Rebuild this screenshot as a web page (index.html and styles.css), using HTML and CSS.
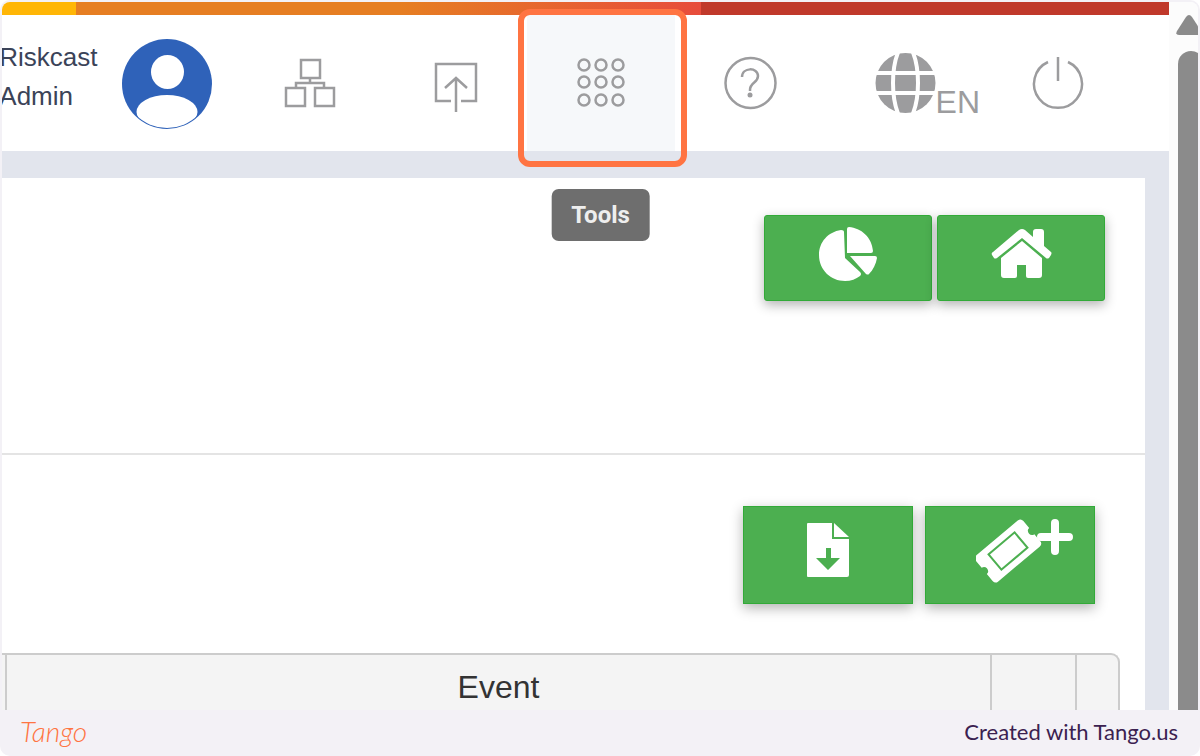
FILE: index.html
```
<!DOCTYPE html>
<html lang="en">
<head>
    <meta charset="utf-8">
    <title>Riskcast</title>
    <link rel="stylesheet" href="styles.css">
</head>
<body>
    <div class="frame">
        <div class="shot">
            <div class="app">
                <div class="color-line"></div>
                <header class="header">
                    <div class="user">
                        <span class="user-name">Riskcast<br>Admin</span>
                        <svg class="avatar" viewBox="0 0 90 90" width="90" height="90">
                            <defs>
                                <clipPath id="avatarClip"><circle cx="45" cy="45" r="44"/></clipPath>
                            </defs>
                            <circle cx="45" cy="45" r="45" fill="#2f62b9"/>
                            <ellipse cx="45.500" cy="33" rx="16.500" ry="17" fill="#fff"/>
                            <ellipse cx="45" cy="73" rx="30.500" ry="17" fill="#fff" clip-path="url(#avatarClip)"/>
                        </svg>
                    </div>
                    <nav class="nav">
                        <a class="nav-item" href="#" aria-label="Organization">
                            <svg class="line-icon" viewBox="0 0 52 52" width="52" height="52">
                                <path d="M17 3h19v18H17zM2 31h19v18H2zM31 31h19v18H31zM26 21v5M12 31v-5h28v5"/>
                            </svg>
                        </a>
                        <a class="nav-item" href="#" aria-label="Upload">
                            <svg class="line-icon" viewBox="0 0 44 52" width="44" height="52">
                                <path d="M17 44H2V7h40v37H27M22 55V21M11 31l11-10 11 10"/>
                            </svg>
                        </a>
                        <a class="nav-item nav-item-active" href="#" aria-label="Tools">
                            <svg class="line-icon" viewBox="0 0 50 52" width="50" height="52">
                                <circle cx="8" cy="8" r="5.500"/><circle cx="25" cy="8" r="5.500"/><circle cx="42" cy="8" r="5.500"/>
                                <circle cx="8" cy="25" r="5.500"/><circle cx="25" cy="25" r="5.500"/><circle cx="42" cy="25" r="5.500"/>
                                <circle cx="8" cy="43" r="5.500"/><circle cx="25" cy="43" r="5.500"/><circle cx="42" cy="43" r="5.500"/>
                            </svg>
                            <span class="highlight"></span>
                            <span class="tooltip">Tools</span>
                        </a>
                        <a class="nav-item" href="#" aria-label="Help">
                            <svg class="line-icon" viewBox="0 0 53 52" width="53" height="52">
                                <circle cx="26.500" cy="26" r="25"/>
                                <path d="M18 20c0-10 16-10 16-1 0 7-8 6-8 14v1"/>
                                <circle class="dot" cx="26" cy="38" r="2.500"/>
                            </svg>
                        </a>
                        <a class="nav-item nav-lang" href="#">
                            <svg viewBox="0 0 61 60" width="61" height="60">
                                <circle cx="30.500" cy="30" r="30" fill="#9c9c9e"/>
                                <path d="M0 20h61M0 40h61M24 -3C16 15 16 45 24 63M37 -3C45 15 45 45 37 63" fill="none" stroke="#fff" stroke-width="4"/>
                            </svg>
                            <span>EN</span>
                        </a>
                        <a class="nav-item" href="#" aria-label="Log out">
                            <svg class="line-icon" viewBox="0 0 52 52" width="52" height="52">
                                <path d="M16 5a24 24 0 1 0 20 0M26 0v24"/>
                            </svg>
                        </a>
                    </nav>
                </header>

                <main class="content">
                    <div class="panel">
                        <section class="toolbar">
                            <button class="btn" type="button" aria-label="Chart">
                                <svg viewBox="0 0 58 54" width="58" height="54">
                                    <path d="M25 5Q25 3 22 3C9 5 0 15 0 28c0 15 12 26 26 26 6 0 11-2 15-5q2-2 0-4L26 31zM28 2v24h24q2 0 2-2C53 10 42 1 30 0q-2 0-2 2zM31 29h25q2 0 2 2c-1 6-4 12-8 16q-1 1-3 0z"/>
                                </svg>
                            </button>
                            <button class="btn" type="button" aria-label="Home">
                                <svg viewBox="0 0 61 54" width="61" height="54">
                                    <path d="M2 25 28 3q3-2 6 0l8 7V5q0-3 3-3h5q3 0 3 3v14l7 6q1 1 0 3l-2 3q-2 1-3 0L31 11 6 31q-2 1-3 0l-2-3q-1-2 1-3z"/>
                                    <path d="M31 14 51 31v17q0 3-3 3H37q-2 0-2-2V38h-9v11q0 2-2 2H13q-3 0-3-3V31z"/>
                                </svg>
                            </button>
                        </section>
                        <section class="events">
                            <div class="event-actions">
                                <button class="btn btn-tall" type="button" aria-label="Download">
                                    <svg viewBox="0 0 42 54" width="42" height="54">
                                        <path fill-rule="evenodd" d="M1 0h24v16h17v36q0 2-2 2H1q-1 0-1-1V1q0-1 1-1zM19 25v10H9l12 12 12-12h-9V25z"/>
                                        <path d="M27 0 42 14H27z"/>
                                    </svg>
                                </button>
                                <button class="btn btn-tall btn-ticket" type="button" aria-label="Add ticket">
                                    <svg viewBox="0 0 98 66" width="98" height="66">
                                        <g transform="translate(32 34) rotate(-40)">
                                            <path d="M-27-17h54q4 0 4 4v9c-5 0-5 8 0 8v9q0 4-4 4h-54q-4 0-4-4V4c5 0 5-8 0-8v-9q0-4 4-4z"/>
                                            <rect class="ticket-line" x="-17" y="-10" width="34" height="20"/>
                                        </g>
                                        <path class="plus" d="M79 6v28M65 20h28"/>
                                    </svg>
                                </button>
                            </div>
                            <table class="event-table">
                                <thead>
                                    <tr>
                                        <th class="col-edge"></th>
                                        <th>Event</th>
                                        <th class="col-action"></th>
                                        <th class="col-last"></th>
                                    </tr>
                                </thead>
                            </table>
                        </section>
                    </div>
                </main>
            </div>
            <div class="scrollbar">
                <svg viewBox="0 0 26 22" width="26" height="22">
                    <path d="M3 21q-4 0-2-4L10 3q3-4 6 0l9 14q2 4-2 4z"/>
                </svg>
                <div class="thumb"></div>
            </div>
        </div>
        <footer class="footer">
            <span class="logo">Tango</span>
            <span class="credit">Created with Tango.us</span>
        </footer>
    </div>
</body>
</html>
```

FILE: styles.css
```
* {
    box-sizing: border-box;
}
body {
    margin: 0;
    background: #fff;
    font-family: "Liberation Sans", Arial, sans-serif;
}
.frame {
    display: flex;
    flex-direction: column;
    height: 100vh;
    padding: 2px 2px 0;
    background: #f3f1f6;
    border-radius: 10px;
    overflow: hidden;
}
.shot {
    flex: 1;
    display: flex;
    min-height: 0;
    background: #fff;
    border-radius: 8px 8px 0 0;
    overflow: hidden;
}
.app {
    flex: 1;
    min-width: 0;
    display: flex;
    flex-direction: column;
    overflow: hidden;
}
.color-line {
    flex: none;
    height: 13px;
    background: linear-gradient(to right, #ffb606 6.3%, #e67e22 6.3%, #e67e22 34%, #e74c3c 59.9%, #c0392b 59.9%);
}

/* Header */
.header {
    flex: none;
    display: flex;
    justify-content: flex-end;
    height: 136px;
    padding-right: 36px;
    background: #fff;
}
.user {
    display: flex;
    align-items: center;
    gap: 24px;
    padding: 2px 23px 0 0;
}
.user-name {
    font-size: 26px;
    line-height: 39px;
    padding-bottom: 14px;
    color: #3b4358;
}
.nav {
    display: flex;
}
.nav-item {
    position: relative;
    display: flex;
    align-items: center;
    padding: 0 49px;
    color: #9c9c9e;
    text-decoration: none;
}
.nav-item-active {
    background: #f6f8fa;
}
.nav-lang {
    padding-right: 3px;
    font-size: 32px;
}
.nav-lang span {
    padding-top: 38px;
}
.line-icon {
    overflow: visible;
    fill: none;
    stroke: #9c9c9e;
    stroke-width: 2.5;
}
.line-icon .dot {
    fill: #9c9c9e;
    stroke: none;
}
.highlight {
    position: absolute;
    top: -6px;
    right: -12px;
    bottom: -16px;
    left: -9px;
    border: 6px solid #ff7442;
    border-radius: 12px;
    z-index: 2;
}
.tooltip {
    position: absolute;
    top: 174px;
    left: 50%;
    transform: translateX(-50%);
    padding: 0 20px;
    border-radius: 7px;
    background: #6e6e6e;
    color: #eee;
    font-family: Roboto, sans-serif;
    font-size: 24px;
    font-weight: bold;
    line-height: 52px;
    z-index: 2;
}

/* Content */
.content {
    flex: 1;
    display: flex;
    min-height: 0;
    padding: 27px 24px 0 0;
    background: #e2e5ed;
}
.panel {
    flex: 1;
    background: #fff;
}
.toolbar {
    display: flex;
    justify-content: flex-end;
    gap: 5px;
    padding: 37px 40px 152px 0;
    border-bottom: 2px solid #e4e4e4;
}
.btn {
    display: flex;
    justify-content: center;
    align-items: flex-start;
    width: 168px;
    height: 86px;
    padding: 11px 0 0;
    border: 1px solid #32aa38;
    border-radius: 3px;
    background: #4caf50;
    box-shadow: 0 4px 12px rgba(0, 0, 0, 0.3);
    fill: #fff;
    cursor: pointer;
}
.btn-tall {
    width: 170px;
    height: 98px;
    padding-top: 16px;
    border-radius: 0;
}
.btn-ticket {
    justify-content: flex-end;
    padding: 10px 20px 0 0;
}
.ticket-line {
    fill: none;
    stroke: #4caf50;
    stroke-width: 2;
}
.plus {
    stroke: #fff;
    stroke-width: 8;
    stroke-linecap: round;
}
.events {
    padding: 51px 25px 0 0;
}
.event-actions {
    display: flex;
    justify-content: flex-end;
    gap: 12px;
    padding-right: 25px;
    margin-bottom: 49px;
}
.event-table {
    width: 100%;
    table-layout: fixed;
    border-collapse: separate;
    border-spacing: 0;
}
.event-table th {
    height: 66px;
    padding: 0;
    border-top: 2px solid #ccc;
    border-right: 2px solid #ccc;
    background: #f4f4f4;
    color: #333;
    font-size: 32px;
    font-weight: normal;
}
.event-table .col-edge {
    width: 5px;
}
.event-table .col-action {
    width: 85px;
}
.event-table .col-last {
    width: 43px;
    border-top-right-radius: 9px;
}

/* Scrollbar on the right edge */
.scrollbar {
    flex: none;
    display: flex;
    flex-direction: column;
    width: 29px;
    padding: 12px 0 0 7px;
    background: #fcfcfc;
    fill: #8b8b8b;
    overflow: hidden;
}
.thumb {
    flex: 1;
    width: 26px;
    margin: 15px 0 0 2px;
    border-radius: 13px 13px 0 0;
    background: #8b8b8b;
}

/* Footer */
.footer {
    flex: none;
    display: flex;
    justify-content: space-between;
    align-items: center;
    height: 46px;
    padding: 0 20px 4px 18px;
    color: #3b2150;
}
.logo {
    color: #ff7442;
    font-family: Lato, cursive;
    font-size: 28px;
    font-style: italic;
    font-weight: 300;
}
.credit {
    font-family: Lato, sans-serif;
    font-size: 22px;
}
```
